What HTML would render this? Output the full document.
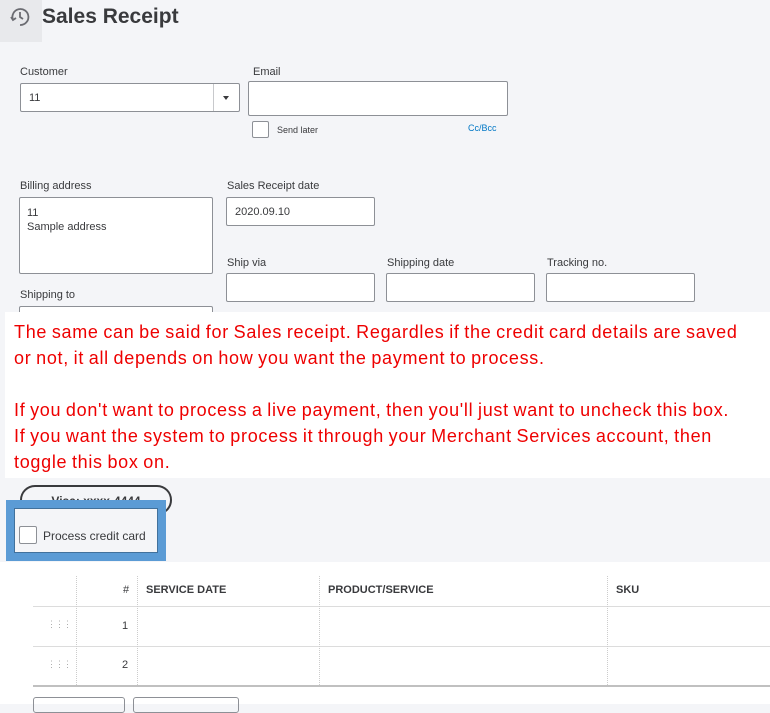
<html><head><style>
body{margin:0;width:770px;height:704px;background:#f4f5f8;font-family:"Liberation Sans",sans-serif;position:relative;overflow:hidden;color:#393a3d}
.a{position:absolute}
.lbl{font-size:11px;color:#393a3d}
.inp{position:absolute;background:#fff;border:1px solid #8d9096;border-radius:2px;box-sizing:border-box;font-size:11px;color:#393a3d}
.red{position:absolute;left:5px;top:312px;width:765px;height:166px;background:#fff;color:#e00;font-size:18px;line-height:26px;padding:7px 0 0 9px;box-sizing:border-box;font-family:"Liberation Sans",sans-serif;letter-spacing:0.7px;white-space:nowrap;word-spacing:-1px}
</style></head><body>
<div class="a" style="left:0;top:0;width:42px;height:42px;background:#e8e9ec"></div>
<svg class="a" style="left:8px;top:5px" width="24" height="24" viewBox="0 0 24 24" fill="none" stroke="#6b6c72" stroke-width="1.8"><path d="M5 15A8 8 0 1 1 12 20"/><path d="M12 7v5l3 2"/><path d="M3 12l2 3 3-2"/></svg>
<div class="a" style="left:42px;top:5px;font-size:21px;font-weight:bold;color:#393a3d">Sales Receipt</div>
<div class="a lbl" style="left:20px;top:66px">Customer</div>
<div class="inp" style="left:20px;top:83px;width:220px;height:29px;padding:8px 8px">11</div>
<div class="a" style="left:213px;top:84px;width:1px;height:27px;background:#c8c9cc"></div>
<div class="a" style="left:223px;top:96px;width:0;height:0;border-left:3.5px solid transparent;border-right:3.5px solid transparent;border-top:4px solid #393a3d"></div>
<div class="a lbl" style="left:253px;top:66px">Email</div>
<div class="inp" style="left:248px;top:81px;width:260px;height:35px"></div>
<div class="inp" style="left:252px;top:121px;width:17px;height:17px"></div>
<div class="a" style="left:277px;top:125px;font-size:9px">Send later</div>
<div class="a" style="left:468px;top:123px;font-size:9px;color:#0077c5">Cc/Bcc</div>
<div class="a lbl" style="left:20px;top:180px">Billing address</div>
<div class="inp" style="left:19px;top:197px;width:194px;height:77px;padding:8px 7px;line-height:14px">11<br>Sample address</div>
<div class="a lbl" style="left:227px;top:180px">Sales Receipt date</div>
<div class="inp" style="left:226px;top:197px;width:149px;height:29px;padding:8px 8px">2020.09.10</div>
<div class="a lbl" style="left:227px;top:257px">Ship via</div>
<div class="inp" style="left:226px;top:273px;width:149px;height:29px"></div>
<div class="a lbl" style="left:387px;top:257px">Shipping date</div>
<div class="inp" style="left:386px;top:273px;width:149px;height:29px"></div>
<div class="a lbl" style="left:547px;top:257px">Tracking no.</div>
<div class="inp" style="left:546px;top:273px;width:149px;height:29px"></div>
<div class="a lbl" style="left:20px;top:289px">Shipping to</div>
<div class="inp" style="left:19px;top:306px;width:194px;height:20px"></div>
<div class="red">The same can be said for Sales receipt. Regardles if the credit card details are saved<br>or not, it all depends on how you want the payment to process.<br><br>If you don't want to process a live payment, then you'll just want to uncheck this box.<br>If you want the system to process it through your Merchant Services account, then<br>toggle this box on.</div>
<div class="a" style="left:20px;top:485px;width:152px;height:30px;border:2px solid #393a3d;border-radius:16px;box-sizing:border-box;font-size:12px;font-weight:bold;text-align:center;line-height:28px;overflow:hidden">Visa: xxxx-4444</div>
<div class="a" style="left:6px;top:500px;width:160px;height:61px;background:#5b9bd5"></div>
<div class="a" style="left:14px;top:508px;width:144px;height:45px;background:#f4f5f8;border:1px solid #41719c;box-sizing:border-box"></div>
<div class="inp" style="left:19px;top:526px;width:18px;height:18px"></div>
<div class="a" style="left:43px;top:529px;font-size:12px;color:#393a3d">Process credit card</div>
<div class="a" style="left:0;top:562px;width:770px;height:142px;background:#fff"></div>
<div class="a" style="left:33px;top:606px;width:737px;height:1px;background:#dcdcdc"></div>
<div class="a" style="left:33px;top:646px;width:737px;height:1px;background:#dcdcdc"></div>
<div class="a" style="left:33px;top:685px;width:737px;height:2px;background:#c0c0c0"></div>
<div class="a" style="left:76px;top:576px;width:0;height:109px;border-left:1px dotted #ccc"></div>
<div class="a" style="left:137px;top:576px;width:0;height:109px;border-left:1px dotted #ccc"></div>
<div class="a" style="left:319px;top:576px;width:0;height:109px;border-left:1px dotted #ccc"></div>
<div class="a" style="left:607px;top:576px;width:0;height:109px;border-left:1px dotted #ccc"></div>
<div class="a" style="left:123px;top:584px;font-size:11px">#</div>
<div class="a" style="left:146px;top:584px;font-size:11px;font-weight:bold;color:#393a3d">SERVICE DATE</div>
<div class="a" style="left:328px;top:584px;font-size:11px;font-weight:bold">PRODUCT/SERVICE</div>
<div class="a" style="left:616px;top:584px;font-size:11px;font-weight:bold">SKU</div>
<div class="a" style="left:47px;top:619px;font-size:9px;color:#aaa;letter-spacing:-1px">⋮⋮⋮</div>
<div class="a" style="left:122px;top:620px;font-size:11px">1</div>
<div class="a" style="left:47px;top:659px;font-size:9px;color:#aaa;letter-spacing:-1px">⋮⋮⋮</div>
<div class="a" style="left:122px;top:659px;font-size:11px">2</div>
<div class="a" style="left:33px;top:697px;width:90px;height:14px;border:1px solid #8d9096;border-radius:3px"></div>
<div class="a" style="left:133px;top:697px;width:104px;height:14px;border:1px solid #8d9096;border-radius:3px"></div>
</body></html>
